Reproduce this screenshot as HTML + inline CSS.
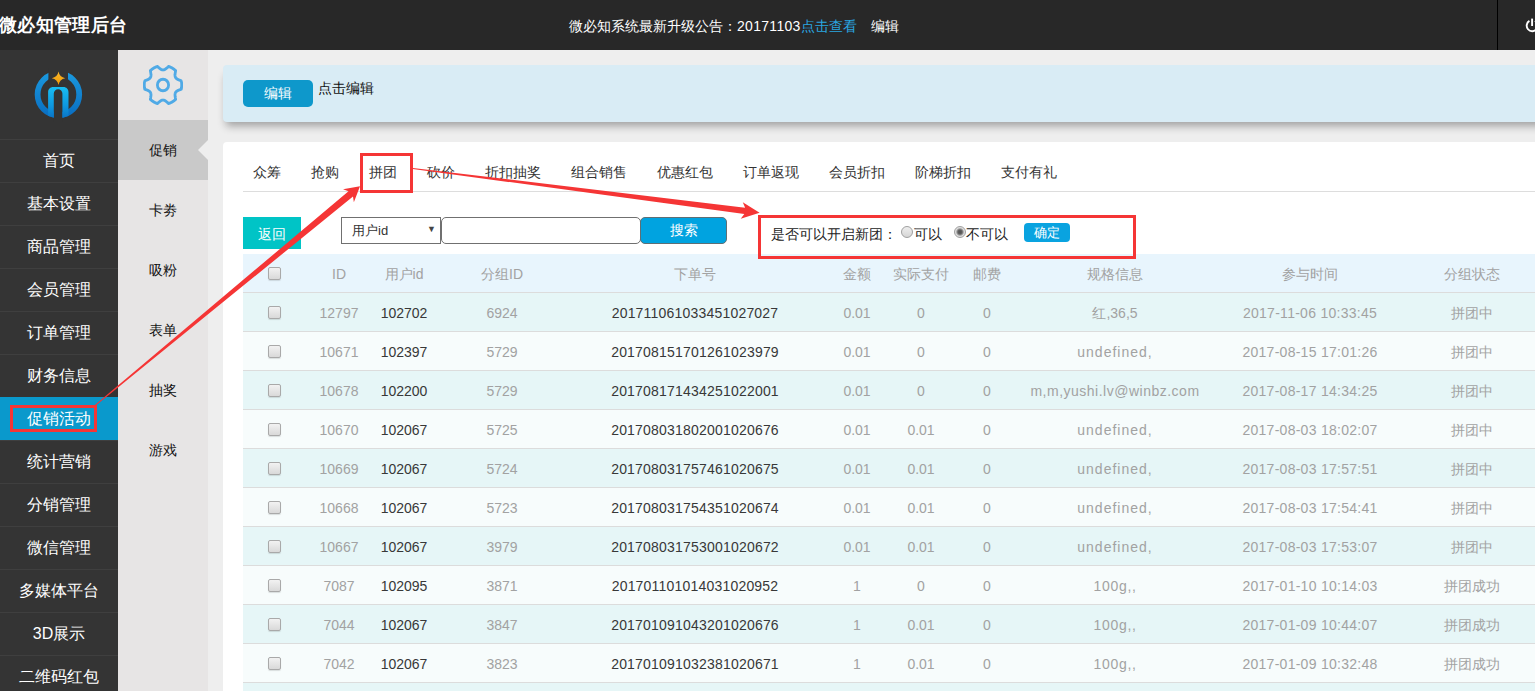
<!DOCTYPE html><html><head><meta charset="utf-8"><style>
*{margin:0;padding:0;box-sizing:border-box}
html,body{width:1535px;height:691px;overflow:hidden;background:#eeeeee;font-family:"Liberation Sans",sans-serif;font-size:14px;color:#333;position:relative}
div,span{position:absolute;white-space:nowrap}
#hdr{left:0;top:0;width:1535px;height:50px;background:#282828}
.title{left:-1px;top:13px;font-size:18px;font-weight:bold;color:#fff;line-height:24px;letter-spacing:0.35px}
.notice{left:569px;top:16px;font-size:14px;color:#fff;line-height:20px}
.notice b{font-weight:normal;color:#2aa6e0}
.vline{left:1497px;top:0;width:1px;height:50px;background:#000}
#sb1{left:0;top:50px;width:118px;height:641px;background:#343434}
.mi{left:0;width:118px;height:43px;border-top:1px solid #3f3f3f;color:#fff;font-size:16px;text-align:center;line-height:42px}
.mi.act{background:#0a99cc;border-top-color:#0a99cc}
#sb2{left:118px;top:50px;width:90px;height:641px;background:#e7e5e5}
.si{left:0;width:90px;height:60px;text-align:center;line-height:60px;font-size:14px;color:#111}
.si.act{background:#c9c9c9}
#panel{left:223px;top:65px;width:1330px;height:57px;background:#d9ecf5;border-radius:4px;box-shadow:0 7px 8px -3px rgba(0,0,0,0.33)}
#main{left:223px;top:142px;width:1330px;height:560px;background:#fff;border-radius:4px}
.tab{top:162px;font-size:14px;line-height:20px;color:#333}
.row{left:243px;width:1300px;height:39px;border-bottom:1px solid #dcdcdc}
.c{top:1px;height:38px;line-height:38px;text-align:center;color:#a2a2a2;font-size:14px}
.c.dk{color:#383838}
.cb{left:25px;width:13px;height:13px;border:1px solid #a9a9a9;border-radius:2px;background:linear-gradient(#f2f2f2,#d9d9d9);box-shadow:0 1px 1px rgba(0,0,0,0.12)}
.btn{border-radius:5px;color:#fff;text-align:center}
.rbox{border:3px solid #f53535}
</style></head><body>
<div id="hdr"><div class="title">微必知管理后台</div><div class="notice">微必知系统最新升级公告：<i style="font-style:normal;letter-spacing:0.3px">20171103</i><b>点击查看</b></div><div class="notice" style="left:871px">编辑</div><div class="vline"></div></div>
<div id="sb1">
<div class="mi" style="top:89px">首页</div>
<div class="mi" style="top:132px">基本设置</div>
<div class="mi" style="top:175px">商品管理</div>
<div class="mi" style="top:218px">会员管理</div>
<div class="mi" style="top:261px">订单管理</div>
<div class="mi" style="top:304px">财务信息</div>
<div class="mi act" style="top:347px">促销活动</div>
<div class="mi" style="top:390px">统计营销</div>
<div class="mi" style="top:433px">分销管理</div>
<div class="mi" style="top:476px">微信管理</div>
<div class="mi" style="top:519px">多媒体平台</div>
<div class="mi" style="top:562px">3D展示</div>
<div class="mi" style="top:605px">二维码红包</div>
</div>
<div id="sb2">
<div class="si act" style="top:70px">促销</div>
<div class="si" style="top:130px">卡劵</div>
<div class="si" style="top:190px">吸粉</div>
<div class="si" style="top:250px">表单</div>
<div class="si" style="top:310px">抽奖</div>
<div class="si" style="top:370px">游戏</div>
</div>
<div id="panel"></div>
<div class="btn" style="left:243px;top:80px;width:70px;height:27px;line-height:27px;background:#0e98cb;font-size:14px">编辑</div>
<div style="left:318px;top:78px;font-size:14px;line-height:20px;color:#111">点击编辑</div>
<div id="main"></div>
<div class="tab" style="left:253px">众筹</div>
<div class="tab" style="left:311px">抢购</div>
<div class="tab" style="left:369px">拼团</div>
<div class="tab" style="left:427px">砍价</div>
<div class="tab" style="left:485px">折扣抽奖</div>
<div class="tab" style="left:571px">组合销售</div>
<div class="tab" style="left:657px">优惠红包</div>
<div class="tab" style="left:743px">订单返现</div>
<div class="tab" style="left:829px">会员折扣</div>
<div class="tab" style="left:915px">阶梯折扣</div>
<div class="tab" style="left:1001px">支付有礼</div>
<div style="left:243px;top:191px;width:1300px;height:1px;background:#dddddd"></div>
<div style="left:243px;top:217px;width:58px;height:32px;background:#00c4c6;color:#fff;text-align:center;line-height:34px;font-size:14px">返回</div>
<div style="left:341px;top:217px;width:100px;height:27px;border:1px solid #707070;background:#fff"><span style="left:10px;top:4px;font-size:13px;line-height:17px;color:#333">用户id</span><span style="left:85px;top:5px;font-size:9px;line-height:12px;color:#444">▼</span></div>
<div style="left:441px;top:217px;width:200px;height:27px;border:1px solid #707070;border-radius:5px;background:#fff"></div>
<div class="btn" style="left:640px;top:217px;width:87px;height:27px;line-height:25px;border:1px solid #5f6f75;background:#00a3e0;font-size:14px">搜索</div>
<div class="row" style="top:254px;height:39px;background:#e8f5fd">
<div class="cb" style="left:25px;top:13px"></div>
<div class="c" style="left:-4px;width:200px">ID</div>
<div class="c" style="left:61px;width:200px">用户id</div>
<div class="c" style="left:159px;width:200px">分组ID</div>
<div class="c" style="left:352px;width:200px">下单号</div>
<div class="c" style="left:514px;width:200px">金额</div>
<div class="c" style="left:578px;width:200px">实际支付</div>
<div class="c" style="left:644px;width:200px">邮费</div>
<div class="c" style="left:772px;width:200px">规格信息</div>
<div class="c" style="left:967px;width:200px">参与时间</div>
<div class="c" style="left:1129px;width:200px">分组状态</div>
</div>
<div class="row" style="top:293px;background:#e6f6f7">
<div class="cb" style="left:25px;top:13px"></div>
<div class="c" style="left:-54px;width:300px;letter-spacing:0px">12797</div>
<div class="c dk" style="left:11px;width:300px;letter-spacing:0px">102702</div>
<div class="c" style="left:109px;width:300px;letter-spacing:0px">6924</div>
<div class="c dk" style="left:302px;width:300px;letter-spacing:0.2px">201711061033451027027</div>
<div class="c" style="left:464px;width:300px;letter-spacing:0px">0.01</div>
<div class="c" style="left:528px;width:300px;letter-spacing:0px">0</div>
<div class="c" style="left:594px;width:300px;letter-spacing:0px">0</div>
<div class="c" style="left:722px;width:300px;letter-spacing:0.0px">红,36,5</div>
<div class="c" style="left:917px;width:300px;letter-spacing:0.27px">2017-11-06 10:33:45</div>
<div class="c" style="left:1079px;width:300px;letter-spacing:0px">拼团中</div>
</div>
<div class="row" style="top:332px;background:#f7fcfc">
<div class="cb" style="left:25px;top:13px"></div>
<div class="c" style="left:-54px;width:300px;letter-spacing:0px">10671</div>
<div class="c dk" style="left:11px;width:300px;letter-spacing:0px">102397</div>
<div class="c" style="left:109px;width:300px;letter-spacing:0px">5729</div>
<div class="c dk" style="left:302px;width:300px;letter-spacing:0.2px">201708151701261023979</div>
<div class="c" style="left:464px;width:300px;letter-spacing:0px">0.01</div>
<div class="c" style="left:528px;width:300px;letter-spacing:0px">0</div>
<div class="c" style="left:594px;width:300px;letter-spacing:0px">0</div>
<div class="c" style="left:722px;width:300px;letter-spacing:1.0px">undefined,</div>
<div class="c" style="left:917px;width:300px;letter-spacing:0.27px">2017-08-15 17:01:26</div>
<div class="c" style="left:1079px;width:300px;letter-spacing:0px">拼团中</div>
</div>
<div class="row" style="top:371px;background:#e6f6f7">
<div class="cb" style="left:25px;top:13px"></div>
<div class="c" style="left:-54px;width:300px;letter-spacing:0px">10678</div>
<div class="c dk" style="left:11px;width:300px;letter-spacing:0px">102200</div>
<div class="c" style="left:109px;width:300px;letter-spacing:0px">5729</div>
<div class="c dk" style="left:302px;width:300px;letter-spacing:0.2px">201708171434251022001</div>
<div class="c" style="left:464px;width:300px;letter-spacing:0px">0.01</div>
<div class="c" style="left:528px;width:300px;letter-spacing:0px">0</div>
<div class="c" style="left:594px;width:300px;letter-spacing:0px">0</div>
<div class="c" style="left:722px;width:300px;letter-spacing:0.5px">m,m,yushi.lv@winbz.com</div>
<div class="c" style="left:917px;width:300px;letter-spacing:0.27px">2017-08-17 14:34:25</div>
<div class="c" style="left:1079px;width:300px;letter-spacing:0px">拼团中</div>
</div>
<div class="row" style="top:410px;background:#f7fcfc">
<div class="cb" style="left:25px;top:13px"></div>
<div class="c" style="left:-54px;width:300px;letter-spacing:0px">10670</div>
<div class="c dk" style="left:11px;width:300px;letter-spacing:0px">102067</div>
<div class="c" style="left:109px;width:300px;letter-spacing:0px">5725</div>
<div class="c dk" style="left:302px;width:300px;letter-spacing:0.2px">201708031802001020676</div>
<div class="c" style="left:464px;width:300px;letter-spacing:0px">0.01</div>
<div class="c" style="left:528px;width:300px;letter-spacing:0px">0.01</div>
<div class="c" style="left:594px;width:300px;letter-spacing:0px">0</div>
<div class="c" style="left:722px;width:300px;letter-spacing:1.0px">undefined,</div>
<div class="c" style="left:917px;width:300px;letter-spacing:0.27px">2017-08-03 18:02:07</div>
<div class="c" style="left:1079px;width:300px;letter-spacing:0px">拼团中</div>
</div>
<div class="row" style="top:449px;background:#e6f6f7">
<div class="cb" style="left:25px;top:13px"></div>
<div class="c" style="left:-54px;width:300px;letter-spacing:0px">10669</div>
<div class="c dk" style="left:11px;width:300px;letter-spacing:0px">102067</div>
<div class="c" style="left:109px;width:300px;letter-spacing:0px">5724</div>
<div class="c dk" style="left:302px;width:300px;letter-spacing:0.2px">201708031757461020675</div>
<div class="c" style="left:464px;width:300px;letter-spacing:0px">0.01</div>
<div class="c" style="left:528px;width:300px;letter-spacing:0px">0.01</div>
<div class="c" style="left:594px;width:300px;letter-spacing:0px">0</div>
<div class="c" style="left:722px;width:300px;letter-spacing:1.0px">undefined,</div>
<div class="c" style="left:917px;width:300px;letter-spacing:0.27px">2017-08-03 17:57:51</div>
<div class="c" style="left:1079px;width:300px;letter-spacing:0px">拼团中</div>
</div>
<div class="row" style="top:488px;background:#f7fcfc">
<div class="cb" style="left:25px;top:13px"></div>
<div class="c" style="left:-54px;width:300px;letter-spacing:0px">10668</div>
<div class="c dk" style="left:11px;width:300px;letter-spacing:0px">102067</div>
<div class="c" style="left:109px;width:300px;letter-spacing:0px">5723</div>
<div class="c dk" style="left:302px;width:300px;letter-spacing:0.2px">201708031754351020674</div>
<div class="c" style="left:464px;width:300px;letter-spacing:0px">0.01</div>
<div class="c" style="left:528px;width:300px;letter-spacing:0px">0.01</div>
<div class="c" style="left:594px;width:300px;letter-spacing:0px">0</div>
<div class="c" style="left:722px;width:300px;letter-spacing:1.0px">undefined,</div>
<div class="c" style="left:917px;width:300px;letter-spacing:0.27px">2017-08-03 17:54:41</div>
<div class="c" style="left:1079px;width:300px;letter-spacing:0px">拼团中</div>
</div>
<div class="row" style="top:527px;background:#e6f6f7">
<div class="cb" style="left:25px;top:13px"></div>
<div class="c" style="left:-54px;width:300px;letter-spacing:0px">10667</div>
<div class="c dk" style="left:11px;width:300px;letter-spacing:0px">102067</div>
<div class="c" style="left:109px;width:300px;letter-spacing:0px">3979</div>
<div class="c dk" style="left:302px;width:300px;letter-spacing:0.2px">201708031753001020672</div>
<div class="c" style="left:464px;width:300px;letter-spacing:0px">0.01</div>
<div class="c" style="left:528px;width:300px;letter-spacing:0px">0.01</div>
<div class="c" style="left:594px;width:300px;letter-spacing:0px">0</div>
<div class="c" style="left:722px;width:300px;letter-spacing:1.0px">undefined,</div>
<div class="c" style="left:917px;width:300px;letter-spacing:0.27px">2017-08-03 17:53:07</div>
<div class="c" style="left:1079px;width:300px;letter-spacing:0px">拼团中</div>
</div>
<div class="row" style="top:566px;background:#f7fcfc">
<div class="cb" style="left:25px;top:13px"></div>
<div class="c" style="left:-54px;width:300px;letter-spacing:0px">7087</div>
<div class="c dk" style="left:11px;width:300px;letter-spacing:0px">102095</div>
<div class="c" style="left:109px;width:300px;letter-spacing:0px">3871</div>
<div class="c dk" style="left:302px;width:300px;letter-spacing:0.2px">201701101014031020952</div>
<div class="c" style="left:464px;width:300px;letter-spacing:0px">1</div>
<div class="c" style="left:528px;width:300px;letter-spacing:0px">0</div>
<div class="c" style="left:594px;width:300px;letter-spacing:0px">0</div>
<div class="c" style="left:722px;width:300px;letter-spacing:0.7px">100g,,</div>
<div class="c" style="left:917px;width:300px;letter-spacing:0.27px">2017-01-10 10:14:03</div>
<div class="c" style="left:1079px;width:300px;letter-spacing:0px">拼团成功</div>
</div>
<div class="row" style="top:605px;background:#e6f6f7">
<div class="cb" style="left:25px;top:13px"></div>
<div class="c" style="left:-54px;width:300px;letter-spacing:0px">7044</div>
<div class="c dk" style="left:11px;width:300px;letter-spacing:0px">102067</div>
<div class="c" style="left:109px;width:300px;letter-spacing:0px">3847</div>
<div class="c dk" style="left:302px;width:300px;letter-spacing:0.2px">201701091043201020676</div>
<div class="c" style="left:464px;width:300px;letter-spacing:0px">1</div>
<div class="c" style="left:528px;width:300px;letter-spacing:0px">0.01</div>
<div class="c" style="left:594px;width:300px;letter-spacing:0px">0</div>
<div class="c" style="left:722px;width:300px;letter-spacing:0.7px">100g,,</div>
<div class="c" style="left:917px;width:300px;letter-spacing:0.27px">2017-01-09 10:44:07</div>
<div class="c" style="left:1079px;width:300px;letter-spacing:0px">拼团成功</div>
</div>
<div class="row" style="top:644px;background:#f7fcfc">
<div class="cb" style="left:25px;top:13px"></div>
<div class="c" style="left:-54px;width:300px;letter-spacing:0px">7042</div>
<div class="c dk" style="left:11px;width:300px;letter-spacing:0px">102067</div>
<div class="c" style="left:109px;width:300px;letter-spacing:0px">3823</div>
<div class="c dk" style="left:302px;width:300px;letter-spacing:0.2px">201701091032381020671</div>
<div class="c" style="left:464px;width:300px;letter-spacing:0px">1</div>
<div class="c" style="left:528px;width:300px;letter-spacing:0px">0.01</div>
<div class="c" style="left:594px;width:300px;letter-spacing:0px">0</div>
<div class="c" style="left:722px;width:300px;letter-spacing:0.7px">100g,,</div>
<div class="c" style="left:917px;width:300px;letter-spacing:0.27px">2017-01-09 10:32:48</div>
<div class="c" style="left:1079px;width:300px;letter-spacing:0px">拼团成功</div>
</div>
<div class="row" style="top:683px;background:#e6f6f7">

<div class="c" style="left:-54px;width:300px;letter-spacing:0px"></div>
<div class="c dk" style="left:11px;width:300px;letter-spacing:0px"></div>
<div class="c" style="left:109px;width:300px;letter-spacing:0px"></div>
<div class="c dk" style="left:302px;width:300px;letter-spacing:0.2px"></div>
<div class="c" style="left:464px;width:300px;letter-spacing:0px"></div>
<div class="c" style="left:528px;width:300px;letter-spacing:0px"></div>
<div class="c" style="left:594px;width:300px;letter-spacing:0px"></div>
<div class="c" style="left:722px;width:300px;letter-spacing:0.5px"></div>
<div class="c" style="left:917px;width:300px;letter-spacing:0.27px"></div>
<div class="c" style="left:1079px;width:300px;letter-spacing:0px"></div>
</div>
<div class="rbox" style="left:758px;top:215px;width:378px;height:44px"></div>
<div style="left:771px;top:224px;font-size:14px;line-height:20px;color:#222">是否可以开启新团：</div>
<div style="left:901px;top:226px;width:12px;height:12px;border-radius:50%;border:1px solid #a0a0a0;background:linear-gradient(#eee,#d5d5d5)"></div>
<div style="left:914px;top:224px;font-size:14px;line-height:20px;color:#222">可以</div>
<div style="left:954px;top:226px;width:12px;height:12px;border-radius:50%;border:1px solid #a0a0a0;background:radial-gradient(circle,#505050 0,#606060 2px,#9a9a9a 3.2px,#dedede 4.2px)"></div>
<div style="left:966px;top:224px;font-size:14px;line-height:20px;color:#222">不可以</div>
<div class="btn" style="left:1024px;top:223px;width:46px;height:19px;line-height:19px;background:#09a3e0;font-size:13px;border-radius:4px">确定</div>
<div class="rbox" style="left:360px;top:153px;width:53px;height:40px"></div>
<div class="rbox" style="left:10px;top:405px;width:87px;height:27px"></div>
<svg style="position:absolute;left:30px;top:68px" width="56" height="54" viewBox="0 0 56 54"><defs><linearGradient id="rg" x1="0" y1="0" x2="0" y2="1"><stop offset="0" stop-color="#1a98de"/><stop offset="1" stop-color="#0a6fc2"/></linearGradient><linearGradient id="ng" gradientUnits="userSpaceOnUse" x1="0" y1="19" x2="0" y2="50"><stop offset="0" stop-color="#18bef3"/><stop offset="0.6" stop-color="#0e98e0"/><stop offset="1" stop-color="#0a74c6"/></linearGradient><linearGradient id="sg" x1="0" y1="0" x2="0" y2="1"><stop offset="0" stop-color="#f8b62c"/><stop offset="1" stop-color="#f29a05"/></linearGradient><clipPath id="cc"><circle cx="28.4" cy="26.4" r="23.7"/></clipPath></defs><circle cx="28.4" cy="26.4" r="20.8" fill="none" stroke="url(#rg)" stroke-width="5.8"/><rect x="18.4" y="0" width="19.6" height="22" fill="#343434"/><rect x="23.8" y="30" width="8.6" height="24" fill="#343434"/><path clip-path="url(#cc)" fill-rule="evenodd" d="M18.1,54 V24.2 C18.1,21.2 20.2,19.1 23.2,19.1 H33.4 C36.4,19.1 38.5,21.2 38.5,24.2 V54 Z M23.8,55 V25.6 A4.3,4.3 0 0 1 32.4,25.6 V55 Z" fill="url(#ng)"/><path d="M28.5,3.6 Q29.5,9.2 35.2,10.2 Q29.5,11.2 28.5,16.9 Q27.5,11.2 21.8,10.2 Q27.5,9.2 28.5,3.6Z" fill="url(#sg)"/></svg>
<svg style="position:absolute;left:143px;top:65px" width="40" height="40" viewBox="0 0 40 40"><g transform="translate(20 20) scale(1 1.04) translate(-20 -20)"><path d="M38.70,20.00 L38.70,20.16 L38.70,20.33 L38.69,20.49 L38.69,20.65 L38.68,20.82 L38.67,20.98 L38.67,21.14 L38.65,21.30 L38.64,21.47 L38.63,21.63 L38.61,21.79 L38.60,21.95 L38.58,22.12 L38.56,22.28 L38.54,22.44 L38.52,22.60 L38.49,22.76 L38.47,22.93 L38.44,23.09 L38.42,23.25 L38.39,23.41 L38.36,23.57 L38.32,23.73 L38.29,23.89 L38.26,24.05 L37.97,24.15 L37.69,24.25 L37.42,24.34 L37.15,24.44 L36.90,24.53 L36.65,24.62 L36.41,24.71 L36.18,24.79 L35.95,24.88 L35.74,24.96 L35.53,25.05 L35.33,25.13 L35.14,25.21 L34.96,25.30 L34.78,25.38 L34.61,25.46 L34.44,25.54 L34.29,25.63 L34.14,25.71 L34.00,25.80 L33.86,25.88 L33.73,25.97 L33.61,26.06 L33.49,26.15 L33.38,26.24 L33.28,26.33 L33.18,26.43 L33.09,26.52 L33.00,26.62 L32.91,26.72 L32.83,26.82 L32.76,26.93 L32.69,27.03 L32.62,27.14 L32.56,27.25 L32.50,27.36 L32.44,27.47 L32.38,27.59 L32.33,27.70 L32.28,27.82 L32.23,27.94 L32.19,28.07 L32.16,28.20 L32.12,28.33 L32.10,28.47 L32.07,28.61 L32.05,28.76 L32.04,28.91 L32.03,29.06 L32.02,29.22 L32.02,29.39 L32.02,29.56 L32.02,29.74 L32.03,29.92 L32.05,30.11 L32.06,30.30 L32.08,30.50 L32.11,30.71 L32.14,30.93 L32.17,31.15 L32.20,31.38 L32.24,31.61 L32.28,31.86 L32.32,32.11 L32.37,32.37 L32.42,32.64 L32.47,32.91 L32.52,33.19 L32.58,33.49 L32.63,33.79 L32.51,33.90 L32.39,34.01 L32.27,34.11 L32.14,34.22 L32.02,34.33 L31.89,34.43 L31.77,34.53 L31.64,34.63 L31.51,34.74 L31.38,34.84 L31.25,34.93 L31.12,35.03 L30.99,35.13 L30.86,35.22 L30.73,35.32 L30.59,35.41 L30.46,35.50 L30.32,35.59 L30.18,35.68 L30.05,35.77 L29.91,35.86 L29.77,35.94 L29.63,36.03 L29.49,36.11 L29.35,36.19 L29.21,36.28 L29.07,36.36 L28.92,36.43 L28.78,36.51 L28.63,36.59 L28.49,36.66 L28.34,36.74 L28.20,36.81 L28.05,36.88 L27.90,36.95 L27.75,37.02 L27.61,37.08 L27.46,37.15 L27.31,37.21 L27.16,37.28 L27.01,37.34 L26.85,37.40 L26.70,37.46 L26.55,37.52 L26.40,37.57 L26.24,37.63 L26.09,37.68 L25.93,37.73 L25.78,37.78 L25.62,37.83 L25.39,37.63 L25.17,37.44 L24.95,37.25 L24.73,37.07 L24.53,36.90 L24.33,36.73 L24.13,36.56 L23.94,36.41 L23.75,36.26 L23.57,36.11 L23.40,35.97 L23.22,35.84 L23.06,35.72 L22.89,35.60 L22.73,35.49 L22.57,35.38 L22.42,35.28 L22.27,35.19 L22.12,35.10 L21.98,35.02 L21.84,34.95 L21.70,34.88 L21.56,34.82 L21.42,34.76 L21.29,34.71 L21.15,34.67 L21.02,34.63 L20.89,34.59 L20.76,34.57 L20.64,34.54 L20.51,34.53 L20.38,34.51 L20.25,34.51 L20.13,34.50 L20.00,34.50 L19.87,34.50 L19.75,34.51 L19.62,34.51 L19.49,34.53 L19.36,34.54 L19.24,34.57 L19.11,34.59 L18.98,34.63 L18.85,34.67 L18.71,34.71 L18.58,34.76 L18.44,34.82 L18.30,34.88 L18.16,34.95 L18.02,35.02 L17.88,35.10 L17.73,35.19 L17.58,35.28 L17.43,35.38 L17.27,35.49 L17.11,35.60 L16.94,35.72 L16.78,35.84 L16.60,35.97 L16.43,36.11 L16.25,36.26 L16.06,36.41 L15.87,36.56 L15.67,36.73 L15.47,36.90 L15.27,37.07 L15.05,37.25 L14.83,37.44 L14.61,37.63 L14.38,37.83 L14.22,37.78 L14.07,37.73 L13.91,37.68 L13.76,37.63 L13.60,37.57 L13.45,37.52 L13.30,37.46 L13.15,37.40 L12.99,37.34 L12.84,37.28 L12.69,37.21 L12.54,37.15 L12.39,37.08 L12.25,37.02 L12.10,36.95 L11.95,36.88 L11.80,36.81 L11.66,36.74 L11.51,36.66 L11.37,36.59 L11.22,36.51 L11.08,36.43 L10.93,36.36 L10.79,36.28 L10.65,36.19 L10.51,36.11 L10.37,36.03 L10.23,35.94 L10.09,35.86 L9.95,35.77 L9.82,35.68 L9.68,35.59 L9.54,35.50 L9.41,35.41 L9.27,35.32 L9.14,35.22 L9.01,35.13 L8.88,35.03 L8.75,34.93 L8.62,34.84 L8.49,34.74 L8.36,34.63 L8.23,34.53 L8.11,34.43 L7.98,34.33 L7.86,34.22 L7.73,34.11 L7.61,34.01 L7.49,33.90 L7.37,33.79 L7.42,33.49 L7.48,33.19 L7.53,32.91 L7.58,32.64 L7.63,32.37 L7.68,32.11 L7.72,31.86 L7.76,31.61 L7.80,31.38 L7.83,31.15 L7.86,30.93 L7.89,30.71 L7.92,30.50 L7.94,30.30 L7.95,30.11 L7.97,29.92 L7.98,29.74 L7.98,29.56 L7.98,29.39 L7.98,29.22 L7.97,29.06 L7.96,28.91 L7.95,28.76 L7.93,28.61 L7.90,28.47 L7.88,28.33 L7.84,28.20 L7.81,28.07 L7.77,27.94 L7.72,27.82 L7.67,27.70 L7.62,27.59 L7.56,27.47 L7.50,27.36 L7.44,27.25 L7.38,27.14 L7.31,27.03 L7.24,26.93 L7.17,26.82 L7.09,26.72 L7.00,26.62 L6.91,26.52 L6.82,26.43 L6.72,26.33 L6.62,26.24 L6.51,26.15 L6.39,26.06 L6.27,25.97 L6.14,25.88 L6.00,25.80 L5.86,25.71 L5.71,25.63 L5.56,25.54 L5.39,25.46 L5.22,25.38 L5.04,25.30 L4.86,25.21 L4.67,25.13 L4.47,25.05 L4.26,24.96 L4.05,24.88 L3.82,24.79 L3.59,24.71 L3.35,24.62 L3.10,24.53 L2.85,24.44 L2.58,24.34 L2.31,24.25 L2.03,24.15 L1.74,24.05 L1.71,23.89 L1.68,23.73 L1.64,23.57 L1.61,23.41 L1.58,23.25 L1.56,23.09 L1.53,22.93 L1.51,22.76 L1.48,22.60 L1.46,22.44 L1.44,22.28 L1.42,22.12 L1.40,21.95 L1.39,21.79 L1.37,21.63 L1.36,21.47 L1.35,21.30 L1.33,21.14 L1.33,20.98 L1.32,20.82 L1.31,20.65 L1.31,20.49 L1.30,20.33 L1.30,20.16 L1.30,20.00 L1.30,19.84 L1.30,19.67 L1.31,19.51 L1.31,19.35 L1.32,19.18 L1.33,19.02 L1.33,18.86 L1.35,18.70 L1.36,18.53 L1.37,18.37 L1.39,18.21 L1.40,18.05 L1.42,17.88 L1.44,17.72 L1.46,17.56 L1.48,17.40 L1.51,17.24 L1.53,17.07 L1.56,16.91 L1.58,16.75 L1.61,16.59 L1.64,16.43 L1.68,16.27 L1.71,16.11 L1.74,15.95 L2.03,15.85 L2.31,15.75 L2.58,15.66 L2.85,15.56 L3.10,15.47 L3.35,15.38 L3.59,15.29 L3.82,15.21 L4.05,15.12 L4.26,15.04 L4.47,14.95 L4.67,14.87 L4.86,14.79 L5.04,14.70 L5.22,14.62 L5.39,14.54 L5.56,14.46 L5.71,14.37 L5.86,14.29 L6.00,14.20 L6.14,14.12 L6.27,14.03 L6.39,13.94 L6.51,13.85 L6.62,13.76 L6.72,13.67 L6.82,13.57 L6.91,13.48 L7.00,13.38 L7.09,13.28 L7.17,13.18 L7.24,13.07 L7.31,12.97 L7.38,12.86 L7.44,12.75 L7.50,12.64 L7.56,12.53 L7.62,12.41 L7.67,12.30 L7.72,12.18 L7.77,12.06 L7.81,11.93 L7.84,11.80 L7.88,11.67 L7.90,11.53 L7.93,11.39 L7.95,11.24 L7.96,11.09 L7.97,10.94 L7.98,10.78 L7.98,10.61 L7.98,10.44 L7.98,10.26 L7.97,10.08 L7.95,9.89 L7.94,9.70 L7.92,9.50 L7.89,9.29 L7.86,9.07 L7.83,8.85 L7.80,8.62 L7.76,8.39 L7.72,8.14 L7.68,7.89 L7.63,7.63 L7.58,7.36 L7.53,7.09 L7.48,6.81 L7.42,6.51 L7.37,6.21 L7.49,6.10 L7.61,5.99 L7.73,5.89 L7.86,5.78 L7.98,5.67 L8.11,5.57 L8.23,5.47 L8.36,5.37 L8.49,5.26 L8.62,5.16 L8.75,5.07 L8.88,4.97 L9.01,4.87 L9.14,4.78 L9.27,4.68 L9.41,4.59 L9.54,4.50 L9.68,4.41 L9.82,4.32 L9.95,4.23 L10.09,4.14 L10.23,4.06 L10.37,3.97 L10.51,3.89 L10.65,3.81 L10.79,3.72 L10.93,3.64 L11.08,3.57 L11.22,3.49 L11.37,3.41 L11.51,3.34 L11.66,3.26 L11.80,3.19 L11.95,3.12 L12.10,3.05 L12.25,2.98 L12.39,2.92 L12.54,2.85 L12.69,2.79 L12.84,2.72 L12.99,2.66 L13.15,2.60 L13.30,2.54 L13.45,2.48 L13.60,2.43 L13.76,2.37 L13.91,2.32 L14.07,2.27 L14.22,2.22 L14.38,2.17 L14.61,2.37 L14.83,2.56 L15.05,2.75 L15.27,2.93 L15.47,3.10 L15.67,3.27 L15.87,3.44 L16.06,3.59 L16.25,3.74 L16.43,3.89 L16.60,4.03 L16.78,4.16 L16.94,4.28 L17.11,4.40 L17.27,4.51 L17.43,4.62 L17.58,4.72 L17.73,4.81 L17.88,4.90 L18.02,4.98 L18.16,5.05 L18.30,5.12 L18.44,5.18 L18.58,5.24 L18.71,5.29 L18.85,5.33 L18.98,5.37 L19.11,5.41 L19.24,5.43 L19.36,5.46 L19.49,5.47 L19.62,5.49 L19.75,5.49 L19.87,5.50 L20.00,5.50 L20.13,5.50 L20.25,5.49 L20.38,5.49 L20.51,5.47 L20.64,5.46 L20.76,5.43 L20.89,5.41 L21.02,5.37 L21.15,5.33 L21.29,5.29 L21.42,5.24 L21.56,5.18 L21.70,5.12 L21.84,5.05 L21.98,4.98 L22.12,4.90 L22.27,4.81 L22.42,4.72 L22.57,4.62 L22.73,4.51 L22.89,4.40 L23.06,4.28 L23.22,4.16 L23.40,4.03 L23.57,3.89 L23.75,3.74 L23.94,3.59 L24.13,3.44 L24.33,3.27 L24.53,3.10 L24.73,2.93 L24.95,2.75 L25.17,2.56 L25.39,2.37 L25.62,2.17 L25.78,2.22 L25.93,2.27 L26.09,2.32 L26.24,2.37 L26.40,2.43 L26.55,2.48 L26.70,2.54 L26.85,2.60 L27.01,2.66 L27.16,2.72 L27.31,2.79 L27.46,2.85 L27.61,2.92 L27.75,2.98 L27.90,3.05 L28.05,3.12 L28.20,3.19 L28.34,3.26 L28.49,3.34 L28.63,3.41 L28.78,3.49 L28.92,3.57 L29.07,3.64 L29.21,3.72 L29.35,3.81 L29.49,3.89 L29.63,3.97 L29.77,4.06 L29.91,4.14 L30.05,4.23 L30.18,4.32 L30.32,4.41 L30.46,4.50 L30.59,4.59 L30.73,4.68 L30.86,4.78 L30.99,4.87 L31.12,4.97 L31.25,5.07 L31.38,5.16 L31.51,5.26 L31.64,5.37 L31.77,5.47 L31.89,5.57 L32.02,5.67 L32.14,5.78 L32.27,5.89 L32.39,5.99 L32.51,6.10 L32.63,6.21 L32.58,6.51 L32.52,6.81 L32.47,7.09 L32.42,7.36 L32.37,7.63 L32.32,7.89 L32.28,8.14 L32.24,8.39 L32.20,8.62 L32.17,8.85 L32.14,9.07 L32.11,9.29 L32.08,9.50 L32.06,9.70 L32.05,9.89 L32.03,10.08 L32.02,10.26 L32.02,10.44 L32.02,10.61 L32.02,10.78 L32.03,10.94 L32.04,11.09 L32.05,11.24 L32.07,11.39 L32.10,11.53 L32.12,11.67 L32.16,11.80 L32.19,11.93 L32.23,12.06 L32.28,12.18 L32.33,12.30 L32.38,12.41 L32.44,12.53 L32.50,12.64 L32.56,12.75 L32.62,12.86 L32.69,12.97 L32.76,13.07 L32.83,13.18 L32.91,13.28 L33.00,13.38 L33.09,13.48 L33.18,13.57 L33.28,13.67 L33.38,13.76 L33.49,13.85 L33.61,13.94 L33.73,14.03 L33.86,14.12 L34.00,14.20 L34.14,14.29 L34.29,14.37 L34.44,14.46 L34.61,14.54 L34.78,14.62 L34.96,14.70 L35.14,14.79 L35.33,14.87 L35.53,14.95 L35.74,15.04 L35.95,15.12 L36.18,15.21 L36.41,15.29 L36.65,15.38 L36.90,15.47 L37.15,15.56 L37.42,15.66 L37.69,15.75 L37.97,15.85 L38.26,15.95 L38.29,16.11 L38.32,16.27 L38.36,16.43 L38.39,16.59 L38.42,16.75 L38.44,16.91 L38.47,17.07 L38.49,17.24 L38.52,17.40 L38.54,17.56 L38.56,17.72 L38.58,17.88 L38.60,18.05 L38.61,18.21 L38.63,18.37 L38.64,18.53 L38.65,18.70 L38.67,18.86 L38.67,19.02 L38.68,19.18 L38.69,19.35 L38.69,19.51 L38.70,19.67 L38.70,19.84Z" fill="none" stroke="#50aae6" stroke-width="2.8" stroke-linejoin="round"/><circle cx="20" cy="20" r="5.6" fill="none" stroke="#50aae6" stroke-width="2.8"/></g></svg>
<svg style="position:absolute;left:198px;top:140px" width="10" height="20" viewBox="0 0 10 20"><path d="M10,0 L0,10 L10,20Z" fill="#eeeeee"/></svg>
<svg style="position:absolute;left:1520px;top:14px" width="15" height="24" viewBox="0 0 15 24"><path d="M9.45,6.94 A5.5,5.5 0 1 0 14.95,6.94" fill="none" stroke="#fff" stroke-width="1.9"/><path d="M12.1,4.6 V12" stroke="#fff" stroke-width="1.9"/></svg>
<svg style="position:absolute;left:0;top:0" width="1535" height="691" viewBox="0 0 1535 691"><path d="M94.92,406.19 L352.99,196.55 L353.86,202.31 L360.00,186.20 L343.02,189.21 L348.52,191.15 L94.28,405.41Z" fill="#f53535"/><path d="M412.74,168.90 L744.32,214.02 L740.70,218.70 L759.60,212.80 L742.79,202.33 L745.12,207.77 L412.86,167.90Z" fill="#f53535"/></svg>
</body></html>
